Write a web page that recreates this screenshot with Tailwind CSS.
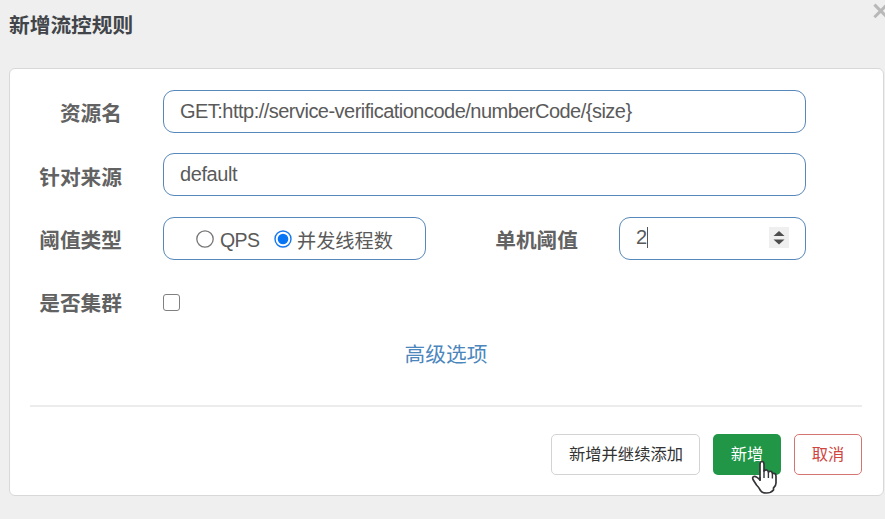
<!DOCTYPE html>
<html lang="zh-CN">
<head>
<meta charset="utf-8">
<title>新增流控规则</title>
<script src="https://cdn.jsdelivr.net/npm/@tailwindcss/browser@4"></script>
</head>
<body class="relative h-[519px] w-[885px] overflow-hidden bg-[#efefef] font-['Liberation_Sans','Noto_Sans_CJK_SC',sans-serif] text-[20.7px] text-[#5a5a5a]">
<header class="flex h-[68px] justify-between pt-[9px] pl-[9px]">
  <h1 class="h-8 text-[20.7px] leading-[33px] font-bold text-[#414549]">新增流控规则</h1>
  <button aria-label="关闭" class="-mt-[9px] -mr-[4px] h-6 w-4">
    <svg class="-mt-[3px] h-4 w-4" viewBox="0 0 16 16" fill="none" stroke="#b8b8b8" stroke-width="3"><path d="M1.4 1.6 14 14.2M14 1.6 1.4 14.2"/></svg>
  </button>
</header>
<main class="ml-[9px] h-[428px] w-[875px] rounded-md border border-[#d8d8d8] bg-white pt-[21px] pr-[21px] pl-5">
  <form class="flex flex-col">
    <div class="mb-5 flex h-[43px]">
      <label class="mt-[8px] mr-[41px] w-[92px] text-right leading-8 font-bold whitespace-nowrap text-[#626262]">资源名</label>
      <div class="h-[43px] w-[643px] rounded-[11px] border-[1.5px] border-[#5788bb] pl-4 text-[20px] leading-[41px] tracking-[-0.52px]">GET:http://service-verificationcode/numberCode/{size}</div>
    </div>
    <div class="mb-[21px] flex h-[43px]">
      <label class="mt-[9px] mr-[41px] w-[92px] text-right leading-8 font-bold whitespace-nowrap text-[#626262]">针对来源</label>
      <div class="h-[43px] w-[643px] rounded-[11px] border-[1.5px] border-[#5788bb] pl-4 text-[20px] leading-[41px] tracking-[-0.4px]">default</div>
    </div>
    <div class="mb-5 flex h-[43px]">
      <label class="mt-[8px] mr-[41px] w-[92px] text-right leading-8 font-bold whitespace-nowrap text-[#626262]">阈值类型</label>
      <div class="flex h-[43px] w-[263px] items-center rounded-[11px] border-[1.5px] border-[#5788bb] pl-8">
        <svg class="mt-px h-[18px] w-[18px]" viewBox="0 0 18 18"><circle cx="9" cy="9" r="8.2" fill="white" stroke="#767676" stroke-width="1.3"/></svg>
        <span class="mt-[5px] ml-[6px] w-[40px] text-[19.5px] tracking-[-0.6px]">QPS</span>
        <svg class="mt-px ml-[14px] h-[18px] w-[18px]" viewBox="0 0 18 18"><circle cx="9" cy="9" r="8" fill="white" stroke="#1677ee" stroke-width="1.4"/><circle cx="9" cy="9" r="5.3" fill="#0875f5"/></svg>
        <span class="mt-[7px] ml-[5px] text-[19.2px] whitespace-nowrap text-[#5a5a5a]">并发线程数</span>
      </div>
      <label class="mt-[8px] mr-[41px] ml-[68px] w-[84px] text-right leading-8 font-bold whitespace-nowrap text-[#626262]">单机阈值</label>
      <div class="flex h-[43px] w-[187px] rounded-[11px] border-[1.5px] border-[#5788bb] pl-4 text-[20px] leading-[39px]">
        <span>2</span><span class="mt-[9px] h-[21px] w-px bg-[#555]"></span>
        <svg class="mt-[9px] mr-[16px] ml-auto h-[21px] w-[20px]" viewBox="0 0 20 21"><path fill="#efefef" d="M0 0h20v21H0z"/><path fill="#4d4d4d" d="m4.5 9 5.5-5 5.5 5zM4.5 12.5h11l-5.5 5z"/></svg>
      </div>
    </div>
    <div class="flex h-[43px]">
      <label class="mt-[8px] mr-[41px] w-[92px] text-right leading-8 font-bold whitespace-nowrap text-[#626262]">是否集群</label>
      <span class="mt-[14px] h-[17px] w-[17px] rounded-[3px] border-[1.5px] border-[#808080]"></span>
    </div>
    <a class="mt-[16px] h-8 text-center text-[20.7px] leading-8 text-[#4b86bd]">高级选项</a>
  </form>
  <footer class="mt-[34px] flex justify-end gap-[13px] border-t-2 border-[#ececec] pt-[27px] text-[16.3px]">
    <button class="h-[41px] w-[149px] rounded-[5px] border-[1.5px] border-[#d3d3d3] pl-px leading-[39px] text-[#333]">新增并继续添加</button>
    <button class="relative h-[41px] w-[68px] rounded-[5px] bg-[#209646] leading-[41px] text-white">新增
      <svg class="absolute top-[26px] left-[38px] h-[35px] w-[27px]" viewBox="0 0 27 35"><path d="M9 20V4.5Q9 1.5 11 1.5T13 4.5V11Q16 8.5 17.5 12Q20.5 10 21.5 13.5Q25 12.5 25 16.5V23Q25 26 22.5 28V30Q20 33 15.5 33T9.5 30.5Q8 27.5 5.5 25L2 19.5Q1 17 3 16.5Q5 16 9 20Z" fill="white" stroke="#343438" stroke-width="1.7" stroke-linejoin="round"/><path d="M13 10v8M17.4 12v6M21.4 13.5v5M9 17v4" fill="none" stroke="#343438" stroke-width="1.4"/></svg>
    </button>
    <button class="h-[41px] w-[68px] rounded-[5px] border-[1.5px] border-[#d57571] leading-[39px] text-[#cf4540]">取消</button>
  </footer>
</main>
</body>
</html>
